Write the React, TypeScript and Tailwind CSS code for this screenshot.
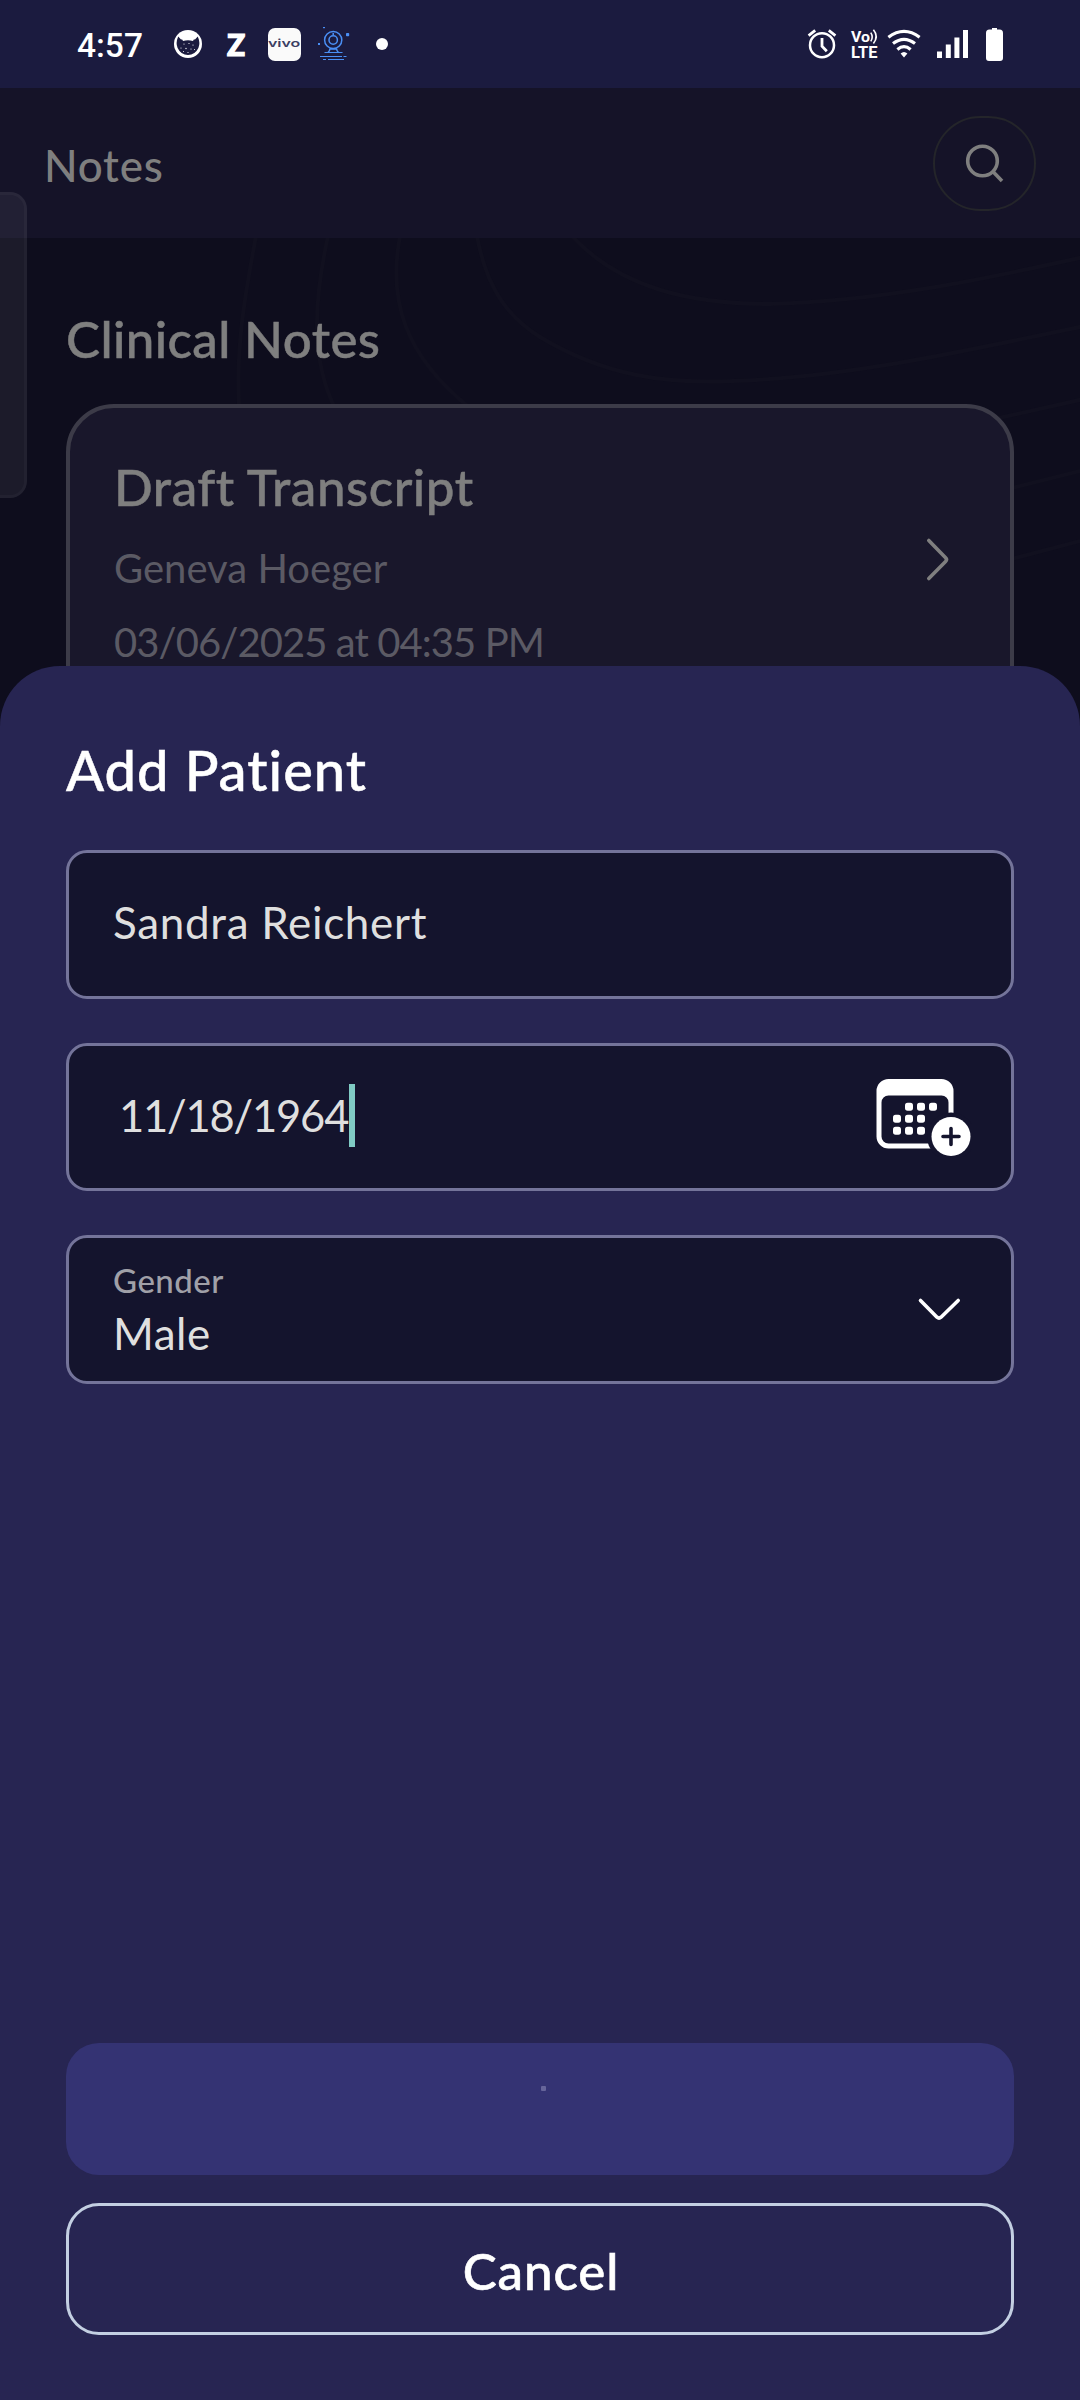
import type { ReactNode } from "react";

function CatIcon() {
  return (
    <svg className="ml-[30px] shrink-0" width="30" height="30" viewBox="0 0 30 30">
      <circle cx="15" cy="15" r="14" fill="#fff" />
      <path
        d="M5.2 7.500 L8 10.600 Q15 9.400 22 10.600 L24.800 7.500 Q27.600 14 25.400 19 Q22 26 15 26 Q8 26 4.600 19 Q2.400 14 5.200 7.500Z"
        fill="#1b1b3f"
      />
      <g fill="#fff">
        <path d="M8 8 L10 12 Q15 10.500 20 12 L22 8Z" />
        <circle cx="11" cy="15" r=".6" />
        <circle cx="16" cy="14.500" r=".6" />
        <circle cx="20" cy="16" r=".6" />
        <circle cx="8" cy="19" r=".6" />
        <circle cx="13" cy="19.500" r=".7" />
        <circle cx="18" cy="20" r=".6" />
        <circle cx="15" cy="23.500" r=".6" />
        <circle cx="10.500" cy="22.500" r=".5" />
        <circle cx="21.500" cy="20.500" r=".5" />
      </g>
    </svg>
  );
}

function WebcamIcon() {
  return (
    <svg className="ml-[16px] shrink-0" width="33" height="34" viewBox="0 0 33 34" fill="none" stroke="#4a8ff5" strokeWidth="1.5">
      <circle cx="16.200" cy="13" r="8.600" />
      <circle cx="16.200" cy="13" r="4.200" />
      <path d="M16.200 6v2M13 21.500 Q12.800 24 11 25.500M19.500 21.500 Q19.700 24 21.500 25.500M13 22h6.500" />
      <path d="M7.500 25.500h18M3 29.500h22M26.500 29.500h3M6 32.500h3M11 32.500h16" strokeWidth="1.2" />
      <g fill="#4a8ff5" stroke="none">
        <rect x="6" y="0" width="2" height="1.2" />
        <rect x="1" y="16" width="2" height="2" />
        <rect x="29" y="6" width="3.200" height="3.200" rx=".8" />
      </g>
    </svg>
  );
}

function AlarmIcon() {
  return (
    <svg className="shrink-0" width="30" height="30" viewBox="0 0 30 30" fill="none" stroke="#fff" strokeWidth="2.500">
      <circle cx="15" cy="16.200" r="12" />
      <path d="M15 9v8.200l4.800 5" strokeWidth="2.800" />
      <path d="M1.600 6.600 L8.200 1.400M21.800 1.400 L28.400 6.600" strokeWidth="2.800" />
    </svg>
  );
}

function VolteIcon() {
  return (
    <svg className="ml-[14px] shrink-0 overflow-visible" width="28" height="30" viewBox="0 0 28 30">
      <g fill="#fff" fontFamily="Roboto, sans-serif" fontWeight="700">
        <text x="0" y="13.400" fontSize="15" textLength="19" lengthAdjust="spacingAndGlyphs">Vo</text>
        <text x="0" y="28.800" fontSize="16.500" textLength="26.500" lengthAdjust="spacingAndGlyphs">LTE</text>
      </g>
      <path d="M19.800 3.600Q22.600 8 19.800 12.400M22.400 .8Q28 7.500 22.400 14.400" fill="none" stroke="#fff" strokeWidth="1.600" />
    </svg>
  );
}

function WifiIcon() {
  return (
    <svg className="ml-[8px] shrink-0" width="34" height="30" viewBox="0 0 34 30" fill="none" stroke="#fff" strokeWidth="3.200">
      <path d="M1.400 8.200Q17 -3.400 32.600 8.200" />
      <path d="M6 14.600Q17 6.200 28 14.600" />
      <path d="M10.400 20.400Q17 15 23.600 20.400" />
      <path d="M13.600 24.600Q17 21.400 20.400 24.600L17 28.600Z" fill="#fff" stroke="none" />
    </svg>
  );
}

function SignalIcon() {
  return (
    <svg className="ml-[16px] shrink-0" width="31" height="30" viewBox="0 0 31 30" fill="#fff">
      <rect x="0" y="22.500" width="5" height="6.500" />
      <rect x="8.800" y="15.500" width="5" height="13.500" />
      <rect x="17.400" y="8.500" width="5" height="20.500" />
      <rect x="26" y="1" width="5" height="28" />
    </svg>
  );
}

function BatteryIcon() {
  return (
    <svg className="ml-[18px] shrink-0" width="17" height="33" viewBox="0 0 17 33" fill="#fff">
      <path d="M6 0h5v1.600h2.600Q17 2 17 5v25q0 3-3 3H3q-3 0-3-3V5Q0 2 3.400 1.600H6Z" />
    </svg>
  );
}

function StatusBar() {
  return (
    <div className="flex h-[88px] items-center bg-[#1b1b3f] pr-[77px] pl-[77px] text-white">
      <span className="w-[66px] whitespace-nowrap pt-[3px] font-[Roboto,sans-serif] text-[33.5px] leading-[40px] font-medium">
        4:57
      </span>
      <CatIcon />
      <span className="ml-[24px] w-[20px] text-[30px] leading-[40px] font-black [-webkit-text-stroke:1.2px_white]">Z</span>
      <span className="ml-[21px] flex h-[33px] w-[33px] items-center justify-center rounded-[7px] bg-[#fafafa] pb-[2px] text-[#3c3f63]">
        <span className="scale-x-[1.45] font-[Inter,sans-serif] text-[11px] leading-none font-semibold">vivo</span>
      </span>
      <WebcamIcon />
      <span className="ml-[26px] h-[12px] w-[12px] rounded-full bg-white" />
      <div className="ml-auto flex items-center">
        <AlarmIcon />
        <VolteIcon />
        <WifiIcon />
        <SignalIcon />
        <BatteryIcon />
      </div>
    </div>
  );
}

function Header() {
  return (
    <header className="flex h-[150px] items-start justify-between bg-[#151328] pt-[28px] pr-[44px] pl-[44px]">
      <h1 className="flex h-[95px] items-center pt-[3px] text-[44px] font-medium tracking-[0.75px] text-[#7f7f7f]">Notes</h1>
      <div className="flex h-[95px] w-[103px] items-center justify-center rounded-[48px] border-2 border-[#24252a]">
        <svg width="40" height="40" viewBox="0 0 40 40" fill="none" stroke="#7f7f7f" strokeWidth="3.600" className="mt-[-1px]">
          <circle cx="17.500" cy="18" r="14.800" />
          <path d="M27.900 28.500 L37 38" />
        </svg>
      </div>
    </header>
  );
}

function ContourLines() {
  return (
    <svg className="absolute inset-x-0 top-0" width="1080" height="482" viewBox="0 238 1080 482" fill="none" stroke="#11101f" strokeWidth="4">
      <path d="M256 236C246 290 234 350 240 420" />
      <path d="M328 236C314 300 310 360 336 410" />
      <path d="M400 236C388 300 404 355 470 408" />
      <path d="M477 236C486 285 505 315 540 337C605 376 665 384 733 381C850 377 970 350 1084 326" />
      <path d="M572 236C620 288 690 304 770 304C880 301 980 280 1084 257" />
      <path d="M990 420L1084 399M1000 491L1084 470M1000 562L1084 540" />
    </svg>
  );
}

function NotesPage() {
  return (
    <main className="relative h-[2162px] bg-[#0e0d1d] px-[66px] pt-[71px]">
      <ContourLines />
      <div className="relative">
        <h2 className="text-[51px] leading-[60px] font-medium tracking-[0.4px] text-[#7f7f7f] [-webkit-text-stroke:0.5px_#7f7f7f]">
          Clinical Notes
        </h2>
        <article className="mt-[35px] flex h-[311px] items-start justify-between rounded-[48px] border-4 border-[#3c3b48] bg-[#19172b] pt-[49px] pr-[57px] pl-[44px]">
          <div>
            <h3 className="text-[51px] leading-[60px] font-medium tracking-[0.55px] text-[#7f7f7f] [-webkit-text-stroke:0.5px_#7f7f7f]">
              Draft Transcript
            </h3>
            <p className="mt-[27px] text-[40px] leading-[48px] text-[#5b5a64]">Geneva Hoeger</p>
            <p className="mt-[26px] text-[40px] leading-[48px] tracking-[-0.93px] text-[#5b5a64]">03/06/2025 at 04:35 PM</p>
          </div>
          <svg className="mt-[79px]" width="30" height="48" viewBox="0 0 30 48" fill="none" stroke="#7f7f7f" strokeWidth="3.600" strokeLinecap="round" strokeLinejoin="round">
            <path d="M5.800 4.500L22.600 21.800Q24.400 23.600 22.600 25.400L5.800 42.500" />
          </svg>
        </article>
      </div>
    </main>
  );
}

function Field({ className, children }: { className: string; children: ReactNode }) {
  return (
    <div className={"flex justify-between rounded-[21px] border-[3px] border-[#74749a] bg-[#14142d] text-[#dfdfdf] " + className}>
      {children}
    </div>
  );
}

const calendarDots = [
  [33, 27.7], [45, 27.7], [57, 27.7],
  [21, 39.7], [33, 39.7], [45, 39.7],
  [21, 51.7], [33, 51.7], [45, 51.7],
];

function CalendarIcon() {
  return (
    <svg className="mt-[2px]" width="96" height="78" viewBox="0 0 96 78">
      <path
        d="M12.5 0h53a12 12 0 0 1 12 12v45.500a12 12 0 0 1-12 12h-53a12 12 0 0 1-12-12V12a12 12 0 0 1 12-12Z M12.500 16.500a7 7 0 0 0-7 7v34a7 7 0 0 0 7 7h53a7 7 0 0 0 7-7v-34a7 7 0 0 0-7-7Z"
        fill="#fff"
        fillRule="evenodd"
      />
      {calendarDots.map(([x, y]) => (
        <rect key={`${x}-${y}`} x={x - 4} y={y - 4} width="8" height="8" rx="2.6" fill="#fff" />
      ))}
      <circle cx="75" cy="57.500" r="24" fill="#14142d" />
      <circle cx="75" cy="57.500" r="19.500" fill="#fff" />
      <path d="M67 57.500h16M75 49.500v16" stroke="#14142d" strokeWidth="3.600" strokeLinecap="round" />
    </svg>
  );
}

function AddPatientSheet() {
  return (
    <section className="absolute inset-x-0 bottom-0 flex h-[1734px] flex-col rounded-t-[60px] bg-[#272552] px-[66px] pt-[70px] pb-[65px]">
      <h2 className="text-[56px] leading-[68px] font-medium tracking-[1px] text-white [-webkit-text-stroke:0.5px_white]">Add Patient</h2>
      <Field className="mt-[46px] h-[149px] items-center pb-[5px] pl-[44px]">
        <span className="text-[44px] tracking-[0.68px]">Sandra Reichert</span>
      </Field>
      <Field className="mt-[44px] h-[148px] items-center pr-[39px] pl-[50px]">
        <div className="flex items-center pb-[3px]">
          <span className="w-[230px] pt-[1px] text-[43.5px] tracking-[-1.2px] whitespace-nowrap">11/18/1964</span>
          <span className="h-[63px] w-[6px] bg-[#80cbc4]" />
        </div>
        <CalendarIcon />
      </Field>
      <Field className="mt-[44px] h-[149px] items-start pt-[22px] pr-[45px] pl-[44px]">
        <div>
          <p className="text-[33px] leading-[40px] font-medium tracking-[0.5px] text-[#a0a0a8]">Gender</p>
          <p className="mt-[7px] text-[44px] leading-[52px] tracking-[0.5px]">Male</p>
        </div>
        <svg className="mt-[35px]" width="54" height="30" viewBox="0 0 54 30" fill="none" stroke="#fff" strokeWidth="3.600" strokeLinecap="round" strokeLinejoin="round">
          <path d="M8.500 5.500L25 22.200Q27 24 29 22.200L46.200 5.500" />
        </svg>
      </Field>
      <button className="mt-auto flex h-[132px] shrink-0 justify-center rounded-[33px] bg-[#343373] pt-[43px] pl-[7px]">
        <span className="h-[5px] w-[5px] rounded-[1px] bg-[#66659a]" />
      </button>
      <button className="mt-[28px] flex h-[132px] shrink-0 items-center justify-center rounded-[33px] border-[3px] border-[#c3cfe2] pt-[4px] pl-[2px] text-[51px] font-medium tracking-[0.9px] text-white [-webkit-text-stroke:0.6px_white]">
        Cancel
      </button>
    </section>
  );
}

export default function App() {
  return (
    <div className="relative h-[2400px] w-[1080px] overflow-hidden font-[Lato,'Noto_Sans',sans-serif]">
      <StatusBar />
      <Header />
      <NotesPage />
      <div className="absolute top-[192px] left-[-20px] h-[306px] w-[47px] rounded-[17px] border-[3px] border-white/[0.03] bg-white/[0.06]" />
      <AddPatientSheet />
    </div>
  );
}
